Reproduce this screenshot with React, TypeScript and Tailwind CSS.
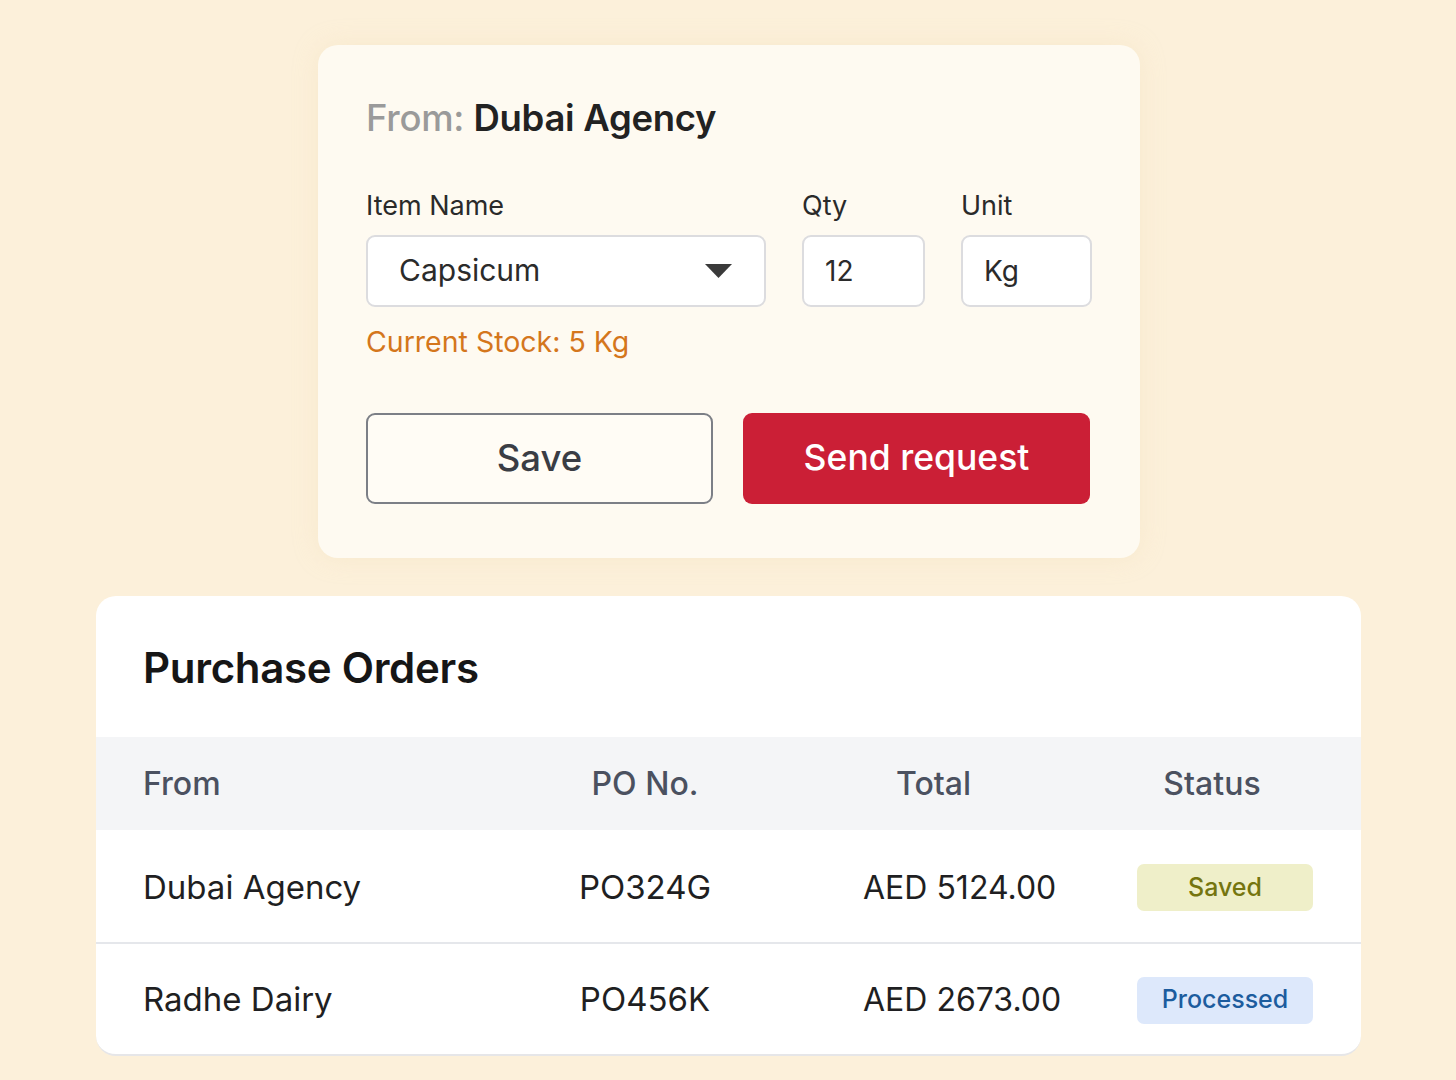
import React from "react";

const rows = [
  { from: "Dubai Agency", po: "PO324G", total: "AED 5124.00", status: "Saved" },
  { from: "Radhe Dairy", po: "PO456K", total: "AED 2673.00", status: "Processed" },
];

export default function App() {
  return (
    <div
      className="w-[1456px] h-[1080px] bg-[#fcf0da] flex flex-col items-start overflow-hidden"
      style={{ fontFamily: "Inter, 'Noto Sans', sans-serif" }}
    >
      {/* Top form card */}
      <div className="ml-[318px] mt-[45px] w-[822px] h-[513px] bg-[#fefaf1] rounded-[20px] px-[48px] pt-[69px] shadow-[0_0_24px_rgba(240,220,180,0.35)]">
        <h1 className="text-[36.5px] leading-none font-semibold tracking-[-0.3px] -mt-[14px]">
          <span className="text-[#9a9a9a] font-medium">From: </span>
          <span className="text-[#222222]">Dubai Agency</span>
        </h1>

        <div className="flex gap-[36px] mt-[53px]">
          <div className="flex flex-col">
            <span className="text-[27px] leading-[32px] text-[#2a2a2a]">Item Name</span>
            <div className="mt-[13px] w-[400px] h-[72px] bg-white border-2 border-[#dcdcdf] rounded-[9px] flex items-center justify-between pl-[31px] pr-[32px]">
              <span className="text-[30px] text-[#2b2b2b]">Capsicum</span>
              <svg width="27" height="14" viewBox="0 0 27 14">
                <path d="M0 0 H27 L13.5 14 Z" fill="#3a3a3a" />
              </svg>
            </div>
          </div>
          <div className="flex flex-col">
            <span className="text-[27px] leading-[32px] text-[#2a2a2a]">Qty</span>
            <div className="mt-[13px] w-[123px] h-[72px] bg-white border-2 border-[#dcdcdf] rounded-[9px] flex items-center pl-[21px]">
              <span className="text-[28px] text-[#2b2b2b]">12</span>
            </div>
          </div>
          <div className="flex flex-col">
            <span className="text-[27px] leading-[32px] text-[#2a2a2a]">Unit</span>
            <div className="mt-[13px] w-[131px] h-[72px] bg-white border-2 border-[#dcdcdf] rounded-[9px] flex items-center pl-[21px]">
              <span className="text-[28px] text-[#2b2b2b]">Kg</span>
            </div>
          </div>
        </div>

        <div className="mt-[18px] text-[28.5px] leading-[34px] text-[#d4761c]">Current Stock: 5 Kg</div>

        <div className="flex gap-[30px] mt-[54px]">
          <button className="w-[347px] h-[91px] border-2 border-[#7c7f86] rounded-[9px] bg-[#fffcf5] text-[36.5px] font-medium text-[#3a3d44]">
            Save
          </button>
          <button className="w-[347px] h-[91px] rounded-[9px] bg-[#cb1f36] text-[35.5px] font-medium text-white">
            Send request
          </button>
        </div>
      </div>

      {/* Purchase orders card */}
      <div className="ml-[96px] mt-[38px] w-[1265px] bg-white rounded-[20px] overflow-hidden border-b-2 border-[#e6e6e8]">
        <h2 className="text-[42px] font-semibold text-[#161616] leading-none pl-[47px] pt-[51px] h-[141px] tracking-[-0.3px]">
          Purchase Orders
        </h2>

        <div className="grid grid-cols-[397px_210px_387px_176px] pl-[47px] h-[93px] items-center bg-[#f4f5f7] text-[32px] font-medium text-[#4b5160]">
          <span>From</span>
          <span className="text-center">PO No.</span>
          <span className="pl-[146px]">Total</span>
          <span className="text-center pr-[26px]">Status</span>
        </div>

        {rows.map((r, i) => (
          <div
            key={r.po}
            className={`grid grid-cols-[397px_210px_387px_176px] pl-[47px] items-center text-[33px] text-[#1f1f22] ${
              i === 0 ? "h-[114px] border-b-2 border-[#e5e7eb] pt-[3px]" : "h-[110px] pt-[2px]"
            }`}
          >
            <span>{r.from}</span>
            <span className="text-center">{r.po}</span>
            <span className="pl-[113px] text-[32px]">{r.total}</span>
            <span
              className={`h-[47px] rounded-[7px] flex items-center justify-center text-[25px] font-medium ${
                r.status === "Saved" ? "bg-[#efefc9] text-[#75750f]" : "bg-[#dde8fb] text-[#1c5c9e]"
              }`}
            >
              {r.status}
            </span>
          </div>
        ))}
      </div>
    </div>
  );
}
